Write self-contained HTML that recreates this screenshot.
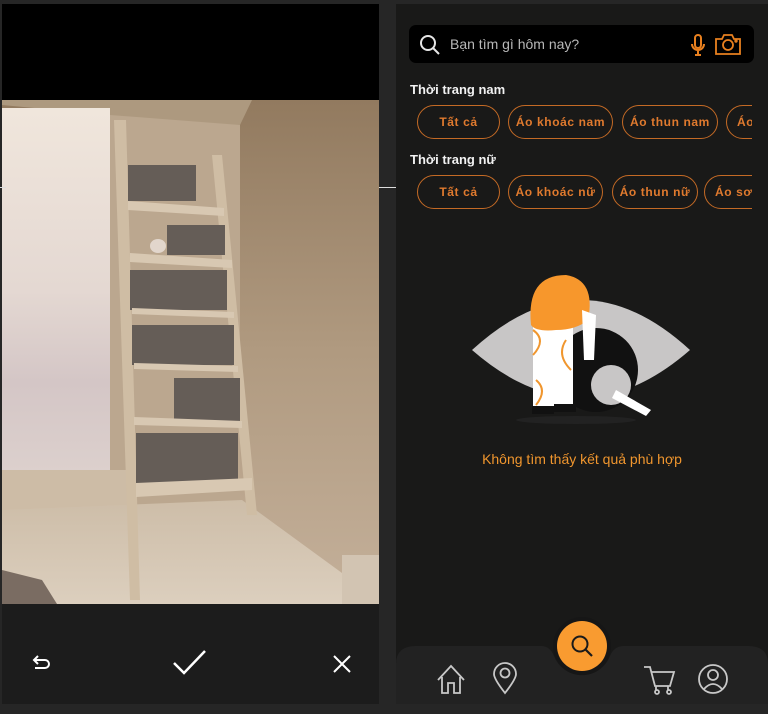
<!DOCTYPE html>
<html><head><meta charset="utf-8"><style>
*{margin:0;padding:0;box-sizing:border-box}
body{width:768px;height:714px;background:#262626;position:relative;overflow:hidden;font-family:"Liberation Sans","Noto Sans CJK SC",sans-serif}
.abs{position:absolute}
#left{left:2px;top:4px;width:377px;height:700px;background:#1c1c1c}
#right{left:396px;top:4px;width:372px;height:700px;background:#191918}
.search{left:13px;top:21px;width:345px;height:38px;background:#000;border-radius:7px}
.title{color:#f2f2f2;font-weight:bold;font-size:13px}
.chip{position:absolute;height:34px;border:1.5px solid #c46a25;border-radius:17px;color:#e07a2e;font-size:12px;font-weight:bold;letter-spacing:0.6px;display:flex;align-items:center;justify-content:center;white-space:nowrap;overflow:hidden}
.row{position:absolute;left:20px;width:336px;height:36px;overflow:hidden}
</style></head><body>
<div id="left" class="abs">
  <div class="abs" style="left:0;top:0;width:377px;height:96px;background:#000"></div>
  <svg class="abs" style="left:0;top:96px" width="377" height="504" viewBox="0 0 377 504">
    <defs>
      <linearGradient id="win" x1="0" y1="0" x2="0" y2="1"><stop offset="0" stop-color="#f0e6dc"/><stop offset=".5" stop-color="#e4d8d2"/><stop offset=".75" stop-color="#d4c6c6"/><stop offset="1" stop-color="#dcd0cd"/></linearGradient>
      <linearGradient id="wall2" x1="0" y1="0" x2="0" y2="1"><stop offset="0" stop-color="#927a5f"/><stop offset=".5" stop-color="#b09a80"/><stop offset="1" stop-color="#c4b09a"/></linearGradient>
      <linearGradient id="floor" x1="0" y1="0" x2="0" y2="1"><stop offset="0" stop-color="#cdbda8"/><stop offset="1" stop-color="#dccfbe"/></linearGradient>
    </defs>
    <rect width="377" height="504" fill="url(#wall2)"/>
    <rect x="108" y="10" width="130" height="480" fill="#bba78f"/>
    <polygon points="0,0 250,0 238,25 108,15 0,5" fill="#ad997f"/>
    <rect x="0" y="8" width="108" height="365" fill="url(#win)"/>
    <rect x="0" y="370" width="125" height="40" fill="#cdbca6"/>
    <polygon points="0,410 240,400 377,500 377,504 0,504" fill="url(#floor)"/>
    <rect x="340" y="455" width="37" height="49" fill="#d2c4b2"/>
    <polygon points="0,470 40,480 55,504 0,504" fill="#7a6c62"/>
    <polygon points="112,20 124,20 138,500 128,500" fill="#cfbda4"/>
    <polygon points="210,55 220,55 255,415 245,415" fill="#cfbda4"/>
    <g fill="#655d57">
      <rect x="126" y="65" width="68" height="36"/>
      <rect x="165" y="125" width="58" height="30"/>
      <rect x="128" y="170" width="97" height="40"/>
      <rect x="130" y="225" width="102" height="40"/>
      <rect x="172" y="278" width="66" height="45"/>
      <rect x="134" y="333" width="102" height="50"/>
    </g>
    <ellipse cx="156" cy="146" rx="8" ry="7" fill="#e2d6cc"/>
    <g fill="#d8c8b2">
      <polygon points="126,101 222,108 222,116 126,110"/>
      <polygon points="128,153 230,160 230,168 128,162"/>
      <polygon points="130,208 232,212 232,218 130,214"/>
      <polygon points="132,263 236,266 236,272 132,269"/>
      <polygon points="132,317 240,321 240,328 132,325"/>
      <polygon points="134,383 250,378 250,390 134,397"/>
    </g>
  </svg>
  <svg class="abs" style="left:28px;top:648px" width="24" height="24" viewBox="0 0 24 24" fill="none" stroke="#fff" stroke-width="2"><path d="M5 8h10a4 4 0 0 1 0 8H5M8 4L4 8l4 4"/></svg>
  <svg class="abs" style="left:170px;top:644px" width="36" height="30" viewBox="0 0 36 30" fill="none" stroke="#fff" stroke-width="2.5"><path d="M2 15l10 10L33 3"/></svg>
  <svg class="abs" style="left:330px;top:650px" width="20" height="20" viewBox="0 0 20 20" fill="none" stroke="#fff" stroke-width="2"><path d="M2 2l16 16M18 2L2 18"/></svg>
</div>

<div id="right" class="abs">
  <div class="abs search">
    <svg class="abs" style="left:10px;top:9px" width="22" height="22" viewBox="0 0 22 22" fill="none" stroke="#e6e6e6" stroke-width="2"><circle cx="9" cy="9" r="7"/><path d="M14 14l6 6"/></svg>
    <div class="abs" style="left:41px;top:11px;color:#b8b8b8;font-size:14px">Bạn tìm gì hôm nay?</div>
    <svg class="abs" style="left:281px;top:8px" width="16" height="24" viewBox="0 0 16 24" fill="none" stroke="#e8801f" stroke-width="2"><rect x="5" y="2" width="6" height="13" rx="3"/><path d="M2 11a6 6 0 0 0 12 0M8 17v4M5 22h6"/></svg>
    <svg class="abs" style="left:305px;top:7px" width="28" height="24" viewBox="0 0 28 24" fill="none" stroke="#e8801f" stroke-width="1.8"><path d="M2 7h6l2-4h8l2 4h6v15H2z"/><circle cx="14" cy="13" r="5"/><circle cx="22" cy="9" r=".8"/></svg>
  </div>
  <div class="abs title" style="left:14px;top:78px">Thời trang nam</div>
  <div class="row" style="top:100px">
    <div class="chip" style="left:1px;top:1px;width:83px">Tất cả</div>
    <div class="chip" style="left:92px;top:1px;width:105px">Áo khoác nam</div>
    <div class="chip" style="left:206px;top:1px;width:96px">Áo thun nam</div>
    <div class="chip" style="left:310px;top:1px;width:60px;justify-content:flex-start;padding-left:10px">Áo</div>
  </div>
  <div class="abs title" style="left:14px;top:148px">Thời trang nữ</div>
  <div class="row" style="top:170px">
    <div class="chip" style="left:1px;top:1px;width:83px">Tất cả</div>
    <div class="chip" style="left:92px;top:1px;width:95px">Áo khoác nữ</div>
    <div class="chip" style="left:196px;top:1px;width:86px">Áo thun nữ</div>
    <div class="chip" style="left:288px;top:1px;width:80px;justify-content:flex-start;padding-left:10px">Áo sơ</div>
  </div>
  <svg class="abs" style="left:70px;top:266px" width="230" height="160" viewBox="0 0 230 160">
    <path d="M6 80 Q115 -20 224 80 Q115 175 6 80Z" fill="#c8c6c6"/>
    <circle cx="130" cy="100" r="42" fill="#111"/>
    <circle cx="145" cy="115" r="20" fill="#c8c6c6"/>
    <path d="M150 120 L185 140 L180 146 L146 128Z" fill="#fff"/>
    <rect x="67" y="50" width="40" height="90" fill="#fff"/>
    <path d="M67 60 q14 10 0 25 M100 70 q-10 15 5 30 M70 110 q12 10 0 25" stroke="#f0962e" stroke-width="2" fill="none"/>
    <path d="M65 55 Q60 5 100 5 Q130 10 122 50 Q110 60 90 60 Q70 62 65 55Z" fill="#f7972c"/>
    <path d="M116 40 L130 45 L128 90 L118 90Z" fill="#fff"/>
    <rect x="66" y="136" width="22" height="8" fill="#111"/><rect x="88" y="134" width="22" height="8" fill="#111"/>
    <ellipse cx="110" cy="150" rx="60" ry="4" fill="#222"/>
  </svg>
  <div class="abs" style="left:0;width:372px;top:447px;text-align:center;color:#f0962e;font-size:14px">Không tìm thấy kết quả phù hợp</div>
  <svg class="abs" style="left:0;top:600px" width="372" height="100" viewBox="0 0 372 100">
    <path d="M0 60 Q0 42 20 42 L145 42 Q154 42 158 52 A30 30 0 0 0 214 52 Q218 42 228 42 L352 42 Q372 42 372 60 L372 100 L0 100Z" fill="#222"/>
    <circle cx="186" cy="42" r="29" fill="#161616"/>
    <circle cx="186" cy="42" r="25" fill="#f99b30"/>
    <circle cx="184" cy="40" r="7.5" fill="none" stroke="#1a1a1a" stroke-width="2"/>
    <path d="M189 45l7 7" stroke="#1a1a1a" stroke-width="2.2"/>
    <g fill="none" stroke="#c8c8c8" stroke-width="1.8">
      <path d="M42 76 L55 62 L68 76 M46 73 V89 H52 V79 H58 V89 H64 V73"/>
      <path d="M109 89 Q98 75 98 70 A11 11 0 0 1 120 70 Q120 75 109 89Z"/><circle cx="109" cy="69" r="4.5"/>
      <path d="M248 63 H254 L259 82 H274 L278 68 H256 M260 86 V82 M272 86 V82"/><circle cx="261" cy="88" r="2"/><circle cx="273" cy="88" r="2"/>
      <circle cx="317" cy="75" r="14"/><circle cx="317" cy="71" r="5"/><path d="M308 85 Q317 75 326 85"/>
    </g>
  </svg>
</div>
<div class="abs" style="left:0;top:187px;width:6px;height:1px;background:#ddd"></div>
<div class="abs" style="left:379px;top:187px;width:17px;height:1px;background:#ddd"></div>
</body></html>
